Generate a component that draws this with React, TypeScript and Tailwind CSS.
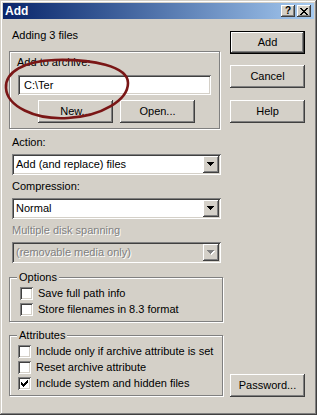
import React from "react";

const raised =
  "shadow-[inset_-1px_-1px_0_#404040,inset_1px_1px_0_#fff,inset_-2px_-2px_0_#808080]";
const sunken =
  "shadow-[inset_1px_1px_0_#808080,inset_-1px_-1px_0_#fff,inset_2px_2px_0_#404040,inset_-2px_-2px_0_#d4d0c8]";
const group =
  "border border-[#808080] shadow-[inset_1px_1px_0_#fff,1px_1px_0_#fff]";

function Btn({ label, def = false, cls = "" }: { label: string; def?: boolean; cls?: string }) {
  if (def) {
    return (
      <div className={`h-[23px] w-[75px] border border-black bg-[#d4d0c8] ${cls}`}>
        <div className={`flex h-full w-full items-center justify-center ${raised}`}>{label}</div>
      </div>
    );
  }
  return (
    <div className={`flex h-[23px] w-[75px] items-center justify-center bg-[#d4d0c8] ${raised} ${cls}`}>
      {label}
    </div>
  );
}

function Arrow({ disabled = false }: { disabled?: boolean }) {
  const c = disabled ? "#808080" : "#000";
  return (
    <svg width="8" height="5" viewBox="0 0 8 5" shapeRendering="crispEdges">
      {disabled && (
        <g fill="#fff" transform="translate(1,1)">
          <rect x="0" y="0" width="7" height="1" />
          <rect x="1" y="1" width="5" height="1" />
          <rect x="2" y="2" width="3" height="1" />
          <rect x="3" y="3" width="1" height="1" />
        </g>
      )}
      <g fill={c}>
        <rect x="0" y="0" width="7" height="1" />
        <rect x="1" y="1" width="5" height="1" />
        <rect x="2" y="2" width="3" height="1" />
        <rect x="3" y="3" width="1" height="1" />
      </g>
    </svg>
  );
}

function Combo({ text, disabled = false, cls = "" }: { text: string; disabled?: boolean; cls?: string }) {
  return (
    <div
      className={`flex h-[21px] w-[209px] items-center p-[2px] ${sunken} ${
        disabled ? "bg-[#d4d0c8]" : "bg-white"
      } ${cls}`}
    >
      <div
        className={`flex-1 pl-[2px] leading-[13px] ${
          disabled ? "text-[#808080] [text-shadow:1px_1px_0_#fff]" : "text-black"
        }`}
      >
        {text}
      </div>
      <div className={`flex h-[17px] w-[16px] items-center justify-center bg-[#d4d0c8] ${raised}`}>
        <Arrow disabled={disabled} />
      </div>
    </div>
  );
}

function Check({ label, checked = false }: { label: string; checked?: boolean }) {
  return (
    <div className="flex h-[13px] items-center gap-[5px]">
      <div className={`relative h-[13px] w-[13px] bg-white ${sunken}`}>
        {checked && (
          <svg className="absolute left-0 top-0" width="13" height="13" viewBox="0 0 13 13" shapeRendering="crispEdges">
            <g fill="#000">
              <rect x="3" y="5" width="1" height="3" />
              <rect x="4" y="6" width="1" height="3" />
              <rect x="5" y="7" width="1" height="3" />
              <rect x="6" y="6" width="1" height="3" />
              <rect x="7" y="5" width="1" height="3" />
              <rect x="8" y="4" width="1" height="3" />
              <rect x="9" y="3" width="1" height="3" />
            </g>
          </svg>
        )}
      </div>
      <span className="leading-[13px]">{label}</span>
    </div>
  );
}

export default function App() {
  return (
    <div
      className="relative h-[415px] w-[317px] overflow-hidden bg-[#d4d0c8] p-[3px] text-[11px] text-black shadow-[inset_-1px_-1px_0_#404040,inset_1px_1px_0_#d4d0c8,inset_-2px_-2px_0_#808080,inset_2px_2px_0_#fff]"
      style={{ fontFamily: '"Liberation Sans", Arial, sans-serif' }}
    >
      {/* Title bar */}
      <div className="flex h-[16px] items-center bg-gradient-to-r from-[#0a246a] to-[#a6caf0] pl-[2px] pr-[3px]">
        <span className="flex-1 text-[12px] font-bold leading-[16px] text-white">Add</span>
        <div className={`flex h-[12px] w-[14px] items-center justify-center bg-[#d4d0c8] ${raised}`}>
          <span className="text-[10px] font-bold leading-[10px]">?</span>
        </div>
        <div className={`ml-[2px] flex h-[12px] w-[14px] items-center justify-center bg-[#d4d0c8] ${raised}`}>
          <svg width="8" height="7" viewBox="0 0 8 7" shapeRendering="crispEdges">
            <g fill="#000">
              <rect x="0" y="0" width="2" height="1" />
              <rect x="6" y="0" width="2" height="1" />
              <rect x="1" y="1" width="2" height="1" />
              <rect x="5" y="1" width="2" height="1" />
              <rect x="2" y="2" width="4" height="1" />
              <rect x="3" y="3" width="2" height="1" />
              <rect x="2" y="4" width="4" height="1" />
              <rect x="1" y="5" width="2" height="1" />
              <rect x="5" y="5" width="2" height="1" />
              <rect x="0" y="6" width="2" height="1" />
              <rect x="6" y="6" width="2" height="1" />
            </g>
          </svg>
        </div>
      </div>

      {/* Client area */}
      <div className="flex gap-[7px] pl-[6px] pr-[9px]">
        {/* Left column */}
        <div className="flex w-[214px] flex-col">
          <div className="mt-[10px] pl-[3px] leading-[13px]">Adding 3 files</div>

          <div className={`mt-[9px] flex h-[78px] w-[211px] flex-col pt-[4px] ${group}`}>
            <div className="ml-[7px] leading-[13px]">Add to archive:</div>
            <div className={`ml-[8px] mt-[6px] flex h-[20px] w-[193px] items-center bg-white pl-[6px] ${sunken}`}>
              <span className="leading-[13px]">C:\Ter</span>
            </div>
            <div className="ml-[28px] mt-[5px] flex gap-[7px]">
              <Btn label="New..." />
              <Btn label="Open..." />
            </div>
          </div>

          <div className="mt-[7px] pl-[3px] leading-[13px]">Action:</div>
          <Combo text="Add (and replace) files" cls="ml-[3px] mt-[5px]" />

          <div className="mt-[5px] pl-[3px] leading-[13px]">Compression:</div>
          <Combo text="Normal" cls="ml-[3px] mt-[5px]" />

          <div className="mt-[5px] pl-[3px] leading-[13px] text-[#808080] [text-shadow:1px_1px_0_#fff]">
            Multiple disk spanning
          </div>
          <Combo text="(removable media only)" disabled cls="ml-[3px] mt-[5px]" />

          <div className={`relative mt-[14px] flex w-[214px] flex-col gap-[3px] pb-[5px] pl-[10px] pt-[9px] ${group}`}>
            <span className="absolute left-[7px] top-[-7px] bg-[#d4d0c8] px-[2px] leading-[13px]">Options</span>
            <Check label="Save full path info" />
            <Check label="Store filenames in 8.3 format" />
          </div>

          <div className={`relative mt-[13px] flex w-[214px] flex-col gap-[3px] pb-[5px] pl-[8px] pt-[9px] ${group}`}>
            <span className="absolute left-[7px] top-[-7px] bg-[#d4d0c8] px-[2px] leading-[13px]">Attributes</span>
            <Check label="Include only if archive attribute is set" />
            <Check label="Reset archive attribute" />
            <Check label="Include system and hidden files" checked />
          </div>
        </div>

        {/* Right column */}
        <div className="flex w-[75px] flex-col">
          <Btn label="Add" def cls="mt-[12px]" />
          <Btn label="Cancel" cls="mt-[11px]" />
          <Btn label="Help" cls="mt-[12px]" />
          <Btn label="Password..." cls="mt-[251px]" />
        </div>
      </div>

      {/* Hand-drawn red ellipse annotation */}
      <svg
        className="pointer-events-none absolute left-0 top-0"
        width="317"
        height="415"
        viewBox="0 0 317 415"
      >
        <path
          d="M 6 88 C 5 72, 24 61, 55 60 C 92 59, 128 66, 128 83 C 128 100, 102 116, 68 118 C 34 120, 7 106, 6 88 Z"
          fill="none"
          stroke="#7a1616"
          strokeWidth="2.6"
        />
      </svg>
    </div>
  );
}
